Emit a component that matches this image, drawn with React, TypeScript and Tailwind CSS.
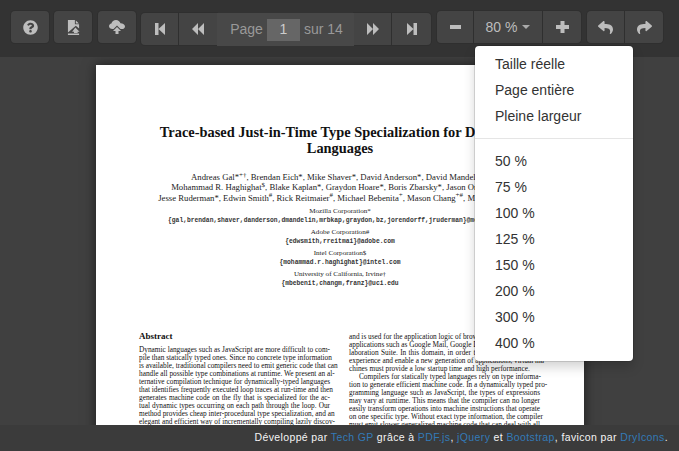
import { FaQuestionCircle, FaReply, FaShare } from 'react-icons/fa'

const leftColumn = [
  'Dynamic languages such as JavaScript are more difficult to com-',
  'pile than statically typed ones. Since no concrete type information',
  'is available, traditional compilers need to emit generic code that can',
  'handle all possible type combinations at runtime. We present an al-',
  'ternative compilation technique for dynamically-typed languages',
  'that identifies frequently executed loop traces at run-time and then',
  'generates machine code on the fly that is specialized for the ac-',
  'tual dynamic types occurring on each path through the loop. Our',
  'method provides cheap inter-procedural type specialization, and an',
  'elegant and efficient way of incrementally compiling lazily discov-',
]

const rightColumn = [
  'and is used for the application logic of browser-based productivity',
  'applications such as Google Mail, Google Docs, and Zimbra Col-',
  'laboration Suite. In this domain, in order to provide a fluid user',
  'experience and enable a new generation of applications, virtual ma-',
  'chines must provide a low startup time and high performance.',
  'Compilers for statically typed languages rely on type informa-',
  'tion to generate efficient machine code. In a dynamically typed pro-',
  'gramming language such as JavaScript, the types of expressions',
  'may vary at runtime. This means that the compiler can no longer',
  'easily transform operations into machine instructions that operate',
  'on one specific type. Without exact type information, the compiler',
  'must emit slower generalized machine code that can deal with all',
]

const sizes = ['50 %', '75 %', '100 %', '125 %', '150 %', '200 %', '300 %', '400 %']

function PdfIcon() {
  return (
    <svg viewBox="0 0 14 16" className="w-[13px] h-[15px]" fill="currentColor">
      <path fillRule="evenodd" d="M1 0h7.5v4.5H13V9L9.5 6 1 13.5zM9.5 0.5 12.8 3.6H9.5zM9 8l4.5 4.5h-2V14h-4v-1.5h-2zM1 14.5h12V16H1z" />
    </svg>
  )
}

function UploadIcon() {
  return (
    <svg viewBox="0 0 16 14" className="w-[16px] h-[14px]" fill="currentColor">
      <path d="M3.500 9C1.500 9 0 7.800 0 6.200 0 4.800 1 3.800 2.400 3.500 3 1.500 4.800 0 7 0c2.100 0 3.900 1.300 4.500 3.200C14 3.200 16 4.600 16 6.400 16 7.900 14.700 9 13 9h-1.500L8 5.500 4.500 9z" />
      <path d="M8 7l4 4H9.500v3h-3v-3H4z" />
    </svg>
  )
}

function SkipIcon({ flip }: { flip?: boolean }) {
  return (
    <svg viewBox="0 0 10 12" className={`w-[10px] h-[12px] ${flip ? 'rotate-180' : ''}`} fill="currentColor">
      <path d="M0 0h3.500v12H0zM10 0v12L3.500 6z" />
    </svg>
  )
}

function DoubleIcon({ flip }: { flip?: boolean }) {
  return (
    <svg viewBox="0 0 12 12" className={`w-[12px] h-[12px] ${flip ? 'rotate-180' : ''}`} fill="currentColor">
      <path d="M6 0v12L0 6zM12 0v12L6 6z" />
    </svg>
  )
}

function PlusIcon() {
  return (
    <svg viewBox="0 0 13 12" className="w-[13px] h-[12px]" fill="currentColor">
      <path d="M4.500 0h4v4H13v4H8.500v4h-4V8H0V4h4.500z" />
    </svg>
  )
}

function Btn({ children, className }: { children: React.ReactNode; className: string }) {
  return <div className={`flex items-center justify-center text-[#bdbdbd] bg-[#444444] border-[#2f2f2f] ${className}`}>{children}</div>
}

function Footer() {
  const link = 'text-[#337ab7]'
  return (
    <footer className="h-[26px] shrink-0 bg-[#3b3b3b] flex items-center justify-end pr-[11px] text-[10.5px] tracking-[0.38px] text-[#f5f5f5] whitespace-nowrap">
      <span>
        Développé par <span className={link}>Tech GP</span> grâce à <span className={link}>PDF.js</span>, <span className={link}>jQuery</span> et <span className={link}>Bootstrap</span>, favicon par <span className={link}>DryIcons</span>.
      </span>
    </footer>
  )
}

export default function App() {
  const sup = 'text-[7px]'
  const mono = "font-['Liberation_Mono',monospace] font-bold text-[6.3px] text-[#333333]"
  const outline = 'shadow-[0_0_0_1px_#2f2f2f]'
  return (
    <div className="relative w-[679px] h-[451px] overflow-hidden flex flex-col bg-[#404040] font-['Liberation_Sans',Arial,sans-serif]">
      <nav className="h-[57px] shrink-0 bg-[#333333] flex items-start pl-[11px] pt-[11px]">
        <Btn className={`w-[38px] h-[32px] rounded-[4px] text-[15px] ${outline}`}><FaQuestionCircle /></Btn>
        <Btn className={`w-[38px] h-[32px] rounded-[4px] ml-[5px] ${outline}`}><PdfIcon /></Btn>
        <Btn className={`w-[38px] h-[32px] rounded-[4px] ml-[6px] ${outline}`}><UploadIcon /></Btn>

        <div className="flex ml-[5px] mt-[2px]">
          <Btn className={`w-[38px] h-[32px] rounded-l-[4px] border-r text-[#7c7c7c] ${outline}`}><SkipIcon /></Btn>
          <Btn className={`w-[38px] h-[32px] text-[#7c7c7c] ${outline}`}><DoubleIcon /></Btn>
          <div className="relative w-[137px] h-[33px] bg-[#484848] flex items-center justify-center text-[14px] text-[#999999] gap-[4px] pl-[2px]">
            <span>Page</span>
            <span className="w-[33px] h-[22px] bg-[#666666] text-[#cccccc] flex items-center justify-center">1</span>
            <span>sur 14</span>
          </div>
          <Btn className={`w-[38px] h-[32px] border-r ${outline}`}><DoubleIcon flip /></Btn>
          <Btn className={`w-[39px] h-[32px] rounded-r-[4px] ${outline}`}><SkipIcon flip /></Btn>
        </div>

        <div className="flex ml-[6px]">
          <Btn className={`w-[37px] h-[32px] rounded-l-[4px] border-r ${outline}`}><span className="w-[11px] h-[4px] bg-current" /></Btn>
          <Btn className={`w-[69px] h-[32px] border-r text-[14px] gap-[5px] text-[#aaaaaa] ${outline}`}>
            80 %<span className="w-0 h-0 border-x-[4px] border-x-transparent border-t-[4px] border-t-[#aaaaaa]" />
          </Btn>
          <Btn className={`w-[38px] h-[32px] rounded-r-[4px] ${outline}`}><PlusIcon /></Btn>
        </div>

        <div className="flex ml-[6px]">
          <Btn className={`w-[38px] h-[32px] rounded-l-[4px] border-r text-[15px] ${outline}`}><FaReply /></Btn>
          <Btn className={`w-[38px] h-[32px] rounded-r-[4px] text-[15px] ${outline}`}><FaShare /></Btn>
        </div>
      </nav>

      <main className="flex-1 min-h-0 overflow-hidden pt-[8px]">
        <article className="w-[488px] h-[400px] ml-[96px] bg-white shadow-[0_0_12px_rgba(0,0,0,0.55)] text-black font-['Liberation_Serif','Times_New_Roman',serif] pt-[59px]">
          <h1 className="text-[14.4px] leading-[16px] font-bold text-center text-[#111111] px-[40px]">
            Trace-based Just-in-Time Type Specialization for Dynamic Languages
          </h1>
          <div className="mt-[16px] text-[8.7px] leading-[10.4px] text-center whitespace-nowrap text-[#222222]">
            <p>Andreas Gal*<sup className={sup}>+†</sup>, Brendan Eich*, Mike Shaver*, David Anderson*, David Mandelin*,</p>
            <p>Mohammad R. Haghighat<sup className={sup}>$</sup>, Blake Kaplan*, Graydon Hoare*, Boris Zbarsky*, Jason Orendorff*,</p>
            <p>Jesse Ruderman*, Edwin Smith<sup className={sup}>#</sup>, Rick Reitmaier<sup className={sup}>#</sup>, Michael Bebenita<sup className={sup}>+</sup>, Mason Chang<sup className={sup}>+#</sup>, Michael Franz<sup className={sup}>+</sup></p>
          </div>
          <div className="mt-[4px] text-center text-[7.1px] leading-[9px] whitespace-nowrap text-[#222222]">
            <p>Mozilla Corporation*</p>
            <p className={mono}>{'{gal,brendan,shaver,danderson,dmandelin,mrbkap,graydon,bz,jorendorff,jruderman}@mozilla.com'}</p>
            <p className="mt-[3px]">Adobe Corporation#</p>
            <p className={mono}>{'{edwsmith,rreitmai}@adobe.com'}</p>
            <p className="mt-[3px]">Intel Corporation$</p>
            <p className={mono}>{'{mohammad.r.haghighat}@intel.com'}</p>
            <p className="mt-[3px]">University of California, Irvine†</p>
            <p className={mono}>{'{mbebenit,changm,franz}@uci.edu'}</p>
          </div>
          <div className="mt-[43px] pl-[43px] flex gap-[19px] text-[7.3px] leading-[8px] text-[#111111]">
            <section className="w-[191px]">
              <h2 className="font-bold text-[9px] leading-[10px] mb-[5px]">Abstract</h2>
              {leftColumn.map(l => (
                <p key={l} className="[text-align-last:justify] whitespace-nowrap">{l}</p>
              ))}
            </section>
            <section className="w-[191px] pt-[2px]">
              {rightColumn.map((l, i) => (
                <p key={l} className={`whitespace-nowrap ${i === 5 ? 'pl-[10px]' : ''} ${i === 4 ? '' : '[text-align-last:justify]'}`}>{l}</p>
              ))}
            </section>
          </div>
        </article>
      </main>

      <Footer />

      <div className="absolute left-[475px] top-[46px] w-[158px] bg-white rounded-[4px] py-[5px] shadow-[0_0_0_1px_rgba(0,0,0,0.12),0_6px_12px_rgba(0,0,0,0.18)] text-[14px] leading-[20px] text-[#333333]">
        <div className="px-[20px] py-[3px]">Taille réelle</div>
        <div className="px-[20px] py-[3px]">Page entière</div>
        <div className="px-[20px] py-[3px]">Pleine largeur</div>
        <div className="h-px my-[9px] bg-[#e5e5e5]" />
        {sizes.map(s => (
          <div key={s} className="px-[20px] py-[3px]">{s}</div>
        ))}
      </div>
    </div>
  )
}
